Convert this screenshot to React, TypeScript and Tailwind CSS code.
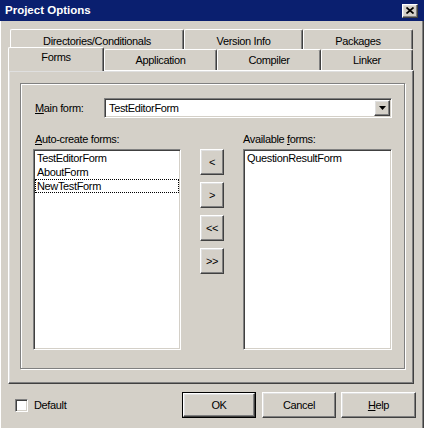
import React from 'react';

// classic 3D edges
const raised =
  'border border-t-white border-l-white border-r-[#404040] border-b-[#404040] shadow-[inset_-1px_-1px_0_#808080,inset_1px_1px_0_#dfdfdf]';
const sunken =
  'border border-t-[#808080] border-l-[#808080] border-r-white border-b-white shadow-[inset_1px_1px_0_#404040,inset_-1px_-1px_0_#d4d0c8]';

const tabEdge =
  'flex items-center justify-center bg-[#d4d0c8] border-t border-l border-r border-t-white border-l-white border-r-[#404040] rounded-t-[2px] shadow-[inset_-1px_0_0_#808080]';

function Tab({ label, className }: { label: string; className: string }) {
  return <div className={`${tabEdge} ${className}`}>{label}</div>;
}

function PushButton({ children, className = '' }: { children: React.ReactNode; className?: string }) {
  return (
    <button className={`flex items-center justify-center bg-[#d4d0c8] ${raised} ${className}`}>
      {children}
    </button>
  );
}

export default function App() {
  const autoCreate = ['TestEditorForm', 'AboutForm', 'NewTestForm'];

  return (
    <div className="w-[424px] h-[428px] flex flex-col bg-[#d4d0c8] text-black text-[11px] tracking-[-0.35px] font-[family-name:'Liberation_Sans',Arial,sans-serif] overflow-hidden select-none">
      {/* Title bar */}
      <div className="h-[21px] flex items-center justify-between bg-[#0a1f6f] pl-[5px] pr-[6px]">
        <span className="text-white font-bold text-[11.5px] tracking-normal">Project Options</span>
        <div className={`w-[16px] h-[14px] flex items-center justify-center bg-[#d4d0c8] ${raised}`}>
          <svg width="8" height="7" viewBox="0 0 8 7">
            <path d="M0.5 0.5 L7.5 6.5 M7.5 0.5 L0.5 6.5" stroke="#000" strokeWidth="1.7" />
          </svg>
        </div>
      </div>

      {/* Body */}
      <div className="flex-1 flex flex-col border-l border-l-white border-r border-r-[#404040] shadow-[inset_-1px_0_0_#808080] pl-[7px] pr-[9px] pt-[8px]">
        {/* Tab rows */}
        <div className="flex ml-[2px] h-[20px]">
          <Tab label="Directories/Conditionals" className="w-[174px] h-[20px] pt-[3px]" />
          <Tab label="Version Info" className="w-[119px] h-[20px] pt-[3px]" />
          <Tab label="Packages" className="w-[110px] h-[20px] pt-[3px]" />
        </div>
        <div className="flex items-end h-[23px] -mt-[2px]">
          <Tab label="Forms" className="relative z-10 w-[96px] h-[24px] -mb-px pb-[4px]" />
          <Tab label="Application" className="w-[113px] h-[21px]" />
          <Tab label="Compiler" className="w-[104px] h-[21px]" />
          <Tab label="Linker" className="w-[92px] h-[21px]" />
        </div>

        {/* Tab sheet */}
        <div className={`w-[406px] h-[314px] pl-[11px] pt-[12px] ${raised}`}>
          <div className="w-[385px] h-[286px] border border-[#808080] shadow-[1px_1px_0_white,inset_1px_1px_0_white] pl-[12px] pt-[14px]">
            {/* Main form */}
            <div className="flex items-center h-[20px]">
              <span className="w-[71px] pl-[2px]">
                <span className="underline">M</span>ain form:
              </span>
              <div className={`w-[288px] h-[20px] flex items-center bg-white p-[1px] ${sunken}`}>
                <span className="flex-1 pl-[3px]">TestEditorForm</span>
                <div className={`w-[16px] h-[16px] flex items-center justify-center bg-[#d4d0c8] ${raised}`}>
                  <svg width="7" height="4" viewBox="0 0 7 4">
                    <polygon points="0,0 7,0 3.5,4" fill="#000" />
                  </svg>
                </div>
              </div>
            </div>

            {/* List captions */}
            <div className="flex mt-[14px] h-[14px] leading-[14px]">
              <span className="w-[210px] pl-[2px]">
                <span className="underline">A</span>uto-create forms:
              </span>
              <span>
                Available <span className="underline">f</span>orms:
              </span>
            </div>

            {/* Lists and move buttons */}
            <div className="flex mt-[3px] gap-[19px]">
              <div className={`w-[148px] h-[201px] bg-white p-[1px] ${sunken}`}>
                {autoCreate.map((name, i) => (
                  <div
                    key={name}
                    className={`h-[14px] leading-[12px] px-[1px] border ${
                      i === 2 ? 'border-dotted border-black' : 'border-transparent'
                    }`}
                  >
                    {name}
                  </div>
                ))}
              </div>

              <div className="w-[24px] flex flex-col gap-[7px]">
                <PushButton className="h-[26px]">&lt;</PushButton>
                <PushButton className="h-[26px]">&gt;</PushButton>
                <PushButton className="h-[26px]">&lt;&lt;</PushButton>
                <PushButton className="h-[26px]">&gt;&gt;</PushButton>
              </div>

              <div className={`w-[149px] h-[201px] bg-white p-[1px] ${sunken}`}>
                <div className="h-[14px] leading-[12px] px-[1px] border border-transparent">QuestionResultForm</div>
              </div>
            </div>
          </div>
        </div>

        {/* Bottom bar */}
        <div className="flex items-center h-[26px] mt-[8px]">
          <div className={`ml-[7px] w-[13px] h-[13px] bg-white ${sunken}`} />
          <span className="ml-[6px]">Default</span>

          <div className="ml-auto -mr-[2px] flex items-center">
            <div className="border border-black">
              <PushButton className="w-[72px] h-[24px]">OK</PushButton>
            </div>
            <PushButton className="ml-[6px] w-[74px] h-[26px]">Cancel</PushButton>
            <PushButton className="ml-[5px] w-[75px] h-[26px]">
              <span className="underline">H</span>elp
            </PushButton>
          </div>
        </div>
      </div>
    </div>
  );
}
